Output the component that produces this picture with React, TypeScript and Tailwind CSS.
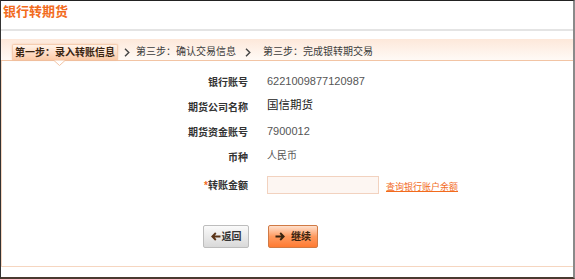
import React from "react";

const Chevron = () => (
  <svg width="6" height="9" viewBox="0 0 6 9" className="shrink-0">
    <path d="M1 0.8 L4.8 4.5 L1 8.2" fill="none" stroke="#444" strokeWidth="1.4" />
  </svg>
);

const Arrow = ({ dir }: { dir: "left" | "right" }) => (
  <svg width="10" height="9" viewBox="0 0 10 9" className="shrink-0">
    {dir === "left" ? (
      <path d="M9.5 4.5 H1.5 M4.8 1 L1.3 4.5 L4.8 8" fill="none" stroke="#5a3418" strokeWidth="1.8" />
    ) : (
      <path d="M0.5 4.5 H8.5 M5.2 1 L8.7 4.5 L5.2 8" fill="none" stroke="#3a2410" strokeWidth="1.8" />
    )}
  </svg>
);

const rows = [
  { label: "银行账号", value: "6221009877120987", cls: "text-[11px] text-[#555]" },
  { label: "期货公司名称", value: "国信期货", cls: "text-[11.5px] text-[#222]" },
  { label: "期货资金账号", value: "7900012", cls: "text-[11px] text-[#555]" },
  { label: "币种", value: "人民币", cls: "text-[10px] text-[#555]" },
];

export default function App() {
  return (
    <div className="w-[575px] h-[279px] bg-white border-t border-l border-t-[#222] border-l-[#333] border-r-2 border-r-[#8a8a8a] border-b-2 border-b-[#4a3a30] font-['Liberation_Sans','Noto_Sans_CJK_SC',sans-serif] flex flex-col">
      {/* Title */}
      <div className="h-[28px] pl-[2px] pt-[1px] text-[13px] font-bold text-[#f26b1d] leading-[20px]">
        银行转期货
      </div>
      <div className="h-[2px] bg-[#e4e4e4]" />

      {/* Steps bar */}
      <div className="mt-[8px] h-[22px] pl-[11px] flex items-end bg-gradient-to-b from-[#fde8da] to-[#fffaf6] border-b border-[#f2c4a4]">
        <div className="relative h-[16px] w-[106px] flex items-center justify-center bg-gradient-to-b from-[#fff2e8] to-[#fbc9a6] border border-b-0 border-[#f5cdb0] rounded-t-[2px] text-[10px] font-bold text-[#3a2410] leading-none shadow-[0_0_2px_rgba(240,160,110,0.5)]">
          第一步：录入转账信息
          <svg width="11" height="6" viewBox="0 0 11 6" className="absolute left-[41px] -bottom-[6px]">
            <path d="M0 0.5 L5.5 5.5 L11 0.5" fill="#fff" stroke="#f2c4a4" strokeWidth="1" />
          </svg>
        </div>
        <div className="h-[16px] flex items-center ml-[6px]">
          <Chevron />
        </div>
        <div className="h-[16px] flex items-center ml-[6px] text-[10px] text-[#3c3c3c] leading-none">
          第三步：确认交易信息
        </div>
        <div className="h-[16px] flex items-center ml-[9px]">
          <Chevron />
        </div>
        <div className="h-[16px] flex items-center ml-[12px] text-[10px] text-[#3c3c3c] leading-none">
          第三步：完成银转期交易
        </div>
      </div>

      {/* Form panel */}
      <div className="border-l border-b border-[#f6d6c0] h-[206px] pt-[9px]">
        {rows.map((r) => (
          <div key={r.label} className="grid grid-cols-[246px_1fr] gap-x-[19px] h-[25px] items-center">
            <div className="text-right text-[10px] font-bold text-[#333] leading-none">{r.label}</div>
            <div className={`${r.cls} leading-none -mt-[3px]`}>{r.value}</div>
          </div>
        ))}
        <div className="grid grid-cols-[246px_1fr] gap-x-[19px] h-[30px] items-center">
          <div className="text-right text-[10px] font-bold text-[#333] leading-none pt-[2px]">
            <span className="text-[#f26b1d]">*</span>转账金额
          </div>
          <div className="flex items-center">
            <input className="w-[112px] h-[18px] border border-[#f2d2bf] bg-[#fdf6f2] outline-none" />
            <a className="ml-[7px] mt-[4px] text-[9px] text-[#f26b1d] underline leading-none cursor-pointer">
              查询银行账户余额
            </a>
          </div>
        </div>
        <div className="grid grid-cols-[247px_1fr] gap-x-[19px] mt-[25px]">
          <div className="flex justify-end">
            <button className="w-[46px] h-[23px] flex items-center justify-center gap-[1px] border border-[#bdbdbd] rounded-[2px] bg-gradient-to-b from-[#fafafa] to-[#d9d9d9] text-[10px] font-bold text-[#333]">
              <Arrow dir="left" />
              返回
            </button>
          </div>
          <div>
            <button className="w-[50px] h-[23px] flex items-center justify-center gap-[6px] border border-[#d07a45] rounded-[2px] bg-gradient-to-b from-[#ffe0cc] via-[#ff9a5e] to-[#ff7a30] text-[10px] font-bold text-[#3a2410]">
              <Arrow dir="right" />
              继续
            </button>
          </div>
        </div>
      </div>
    </div>
  );
}
